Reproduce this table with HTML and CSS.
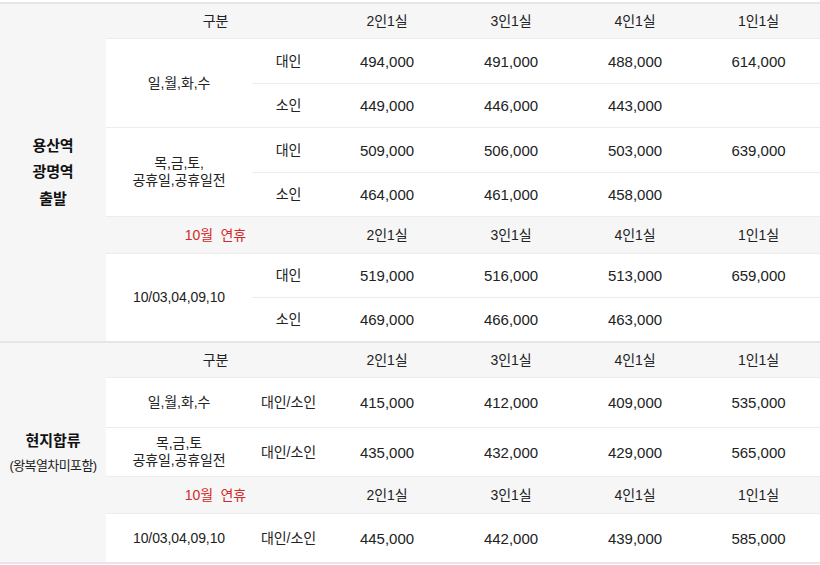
FILE: index.html
```html
<!DOCTYPE html>
<html lang="ko">
<head>
<meta charset="utf-8">
<link rel="stylesheet" href="styles.css">
</head>
<body>
<div class="wrap">
<table class="price">
  <colgroup>
    <col class="c-area"><col class="c-date"><col class="c-type">
    <col class="c-p"><col class="c-p"><col class="c-p"><col class="c-p4">
  </colgroup>
  <tbody class="sec">
    <tr class="head first">
      <td class="area" rowspan="8"><div class="area-name">용산역<br>광명역<br>출발</div></td>
      <td colspan="2">구분</td><td>2인1실</td><td>3인1실</td><td>4인1실</td><td>1인1실</td>
    </tr>
    <tr class="row tall">
      <td rowspan="2" class="date">일,월,화,수</td><td>대인</td><td>494,000</td><td>491,000</td><td>488,000</td><td>614,000</td>
    </tr>
    <tr class="row">
      <td>소인</td><td>449,000</td><td>446,000</td><td>443,000</td><td></td>
    </tr>
    <tr class="row tall">
      <td rowspan="2" class="date two">목,금,토,<br>공휴일,공휴일전</td><td>대인</td><td>509,000</td><td>506,000</td><td>503,000</td><td>639,000</td>
    </tr>
    <tr class="row">
      <td>소인</td><td>464,000</td><td>461,000</td><td>458,000</td><td></td>
    </tr>
    <tr class="head">
      <td colspan="2" class="red">10월&nbsp; 연휴</td><td>2인1실</td><td>3인1실</td><td>4인1실</td><td>1인1실</td>
    </tr>
    <tr class="row">
      <td rowspan="2" class="date">10/03,04,09,10</td><td>대인</td><td>519,000</td><td>516,000</td><td>513,000</td><td>659,000</td>
    </tr>
    <tr class="row">
      <td>소인</td><td>469,000</td><td>466,000</td><td>463,000</td><td></td>
    </tr>
  </tbody>
  <tbody class="sec">
    <tr class="head first">
      <td class="area" rowspan="5"><div class="area-name">현지합류</div><div class="area-note">(왕복열차미포함)</div></td>
      <td colspan="2">구분</td><td>2인1실</td><td>3인1실</td><td>4인1실</td><td>1인1실</td>
    </tr>
    <tr class="row2 tall">
      <td>일,월,화,수</td><td>대인/소인</td><td>415,000</td><td>412,000</td><td>409,000</td><td>535,000</td>
    </tr>
    <tr class="row2">
      <td class="two">목,금,토<br>공휴일,공휴일전</td><td>대인/소인</td><td>435,000</td><td>432,000</td><td>429,000</td><td>565,000</td>
    </tr>
    <tr class="head">
      <td colspan="2" class="red">10월&nbsp; 연휴</td><td>2인1실</td><td>3인1실</td><td>4인1실</td><td>1인1실</td>
    </tr>
    <tr class="row2">
      <td>10/03,04,09,10</td><td>대인/소인</td><td>445,000</td><td>442,000</td><td>439,000</td><td>585,000</td>
    </tr>
  </tbody>
</table>
</div>
</body>
</html>
```
FILE: styles.css
```css
html, body {
  margin: 0;
  padding: 0;
  background: #fff;
}
body {
  font-family: "Liberation Sans", "Noto Sans CJK KR", sans-serif;
  color: #222;
  font-size: 14px;
}
.wrap {
  padding-top: 2px;
  width: 820px;
  overflow: hidden;
}
.price {
  width: 820px;
  table-layout: fixed;
  border-collapse: collapse;
  border-top: 2px solid #e6e6e6;
  border-bottom: 2px solid #e6e6e6;
}
.c-area { width: 106px; }
.c-date { width: 146px; }
.c-type { width: 73px; }
.c-p { width: 124px; }
.c-p4 { width: 123px; }
.price td {
  padding: 0;
  text-align: center;
  vertical-align: middle;
  border-bottom: 1px solid #ececec;
  line-height: 17px;
  letter-spacing: -0.1px;
}
.row td:nth-last-child(-n+4),
.row2 td:nth-last-child(-n+4) {
  font-size: 15px;
  letter-spacing: 0;
}
.sec + .sec {
  border-top: 2px solid #e6e6e6;
}
.head td {
  background: #f6f6f6;
  height: 36px;
}
.head.first td {
  height: 34px;
}
.row td {
  height: 43px;
}
.row.tall td {
  height: 44px;
}
.row2 td {
  height: 48px;
}
.row2.tall td {
  height: 49px;
}
.price td.area {
  background: #f6f6f6;
  border-bottom: none;
}
.area-name {
  font-weight: 700;
  font-size: 15px;
  line-height: 26.5px;
  color: #111;
}
.area-note {
  font-size: 13px;
  line-height: 22px;
  color: #222;
  letter-spacing: -0.6px;
}
.price td.two {
  line-height: 17px;
}
.price td.red {
  color: #d22a2a;
}
.price .sec tr:last-child td {
  border-bottom: none;
}
```
